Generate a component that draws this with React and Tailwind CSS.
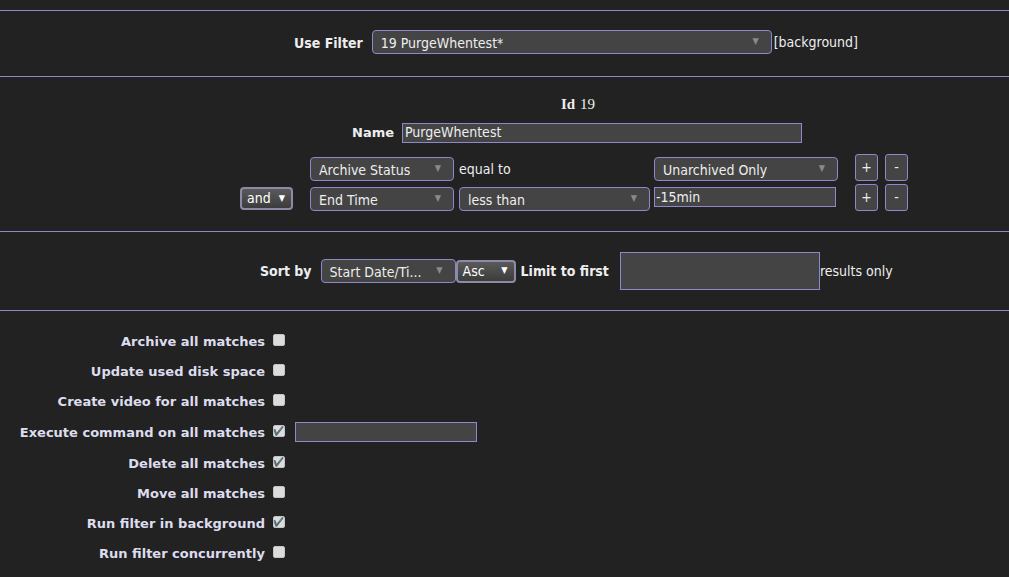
import React from 'react';

const tahoma = "font-['DejaVu_Sans',sans-serif] [font-stretch:condensed]";
const verdana = "font-['DejaVu_Sans',Verdana,sans-serif]";

function Caret({ light }) {
  return (
    <span className={light ? 'text-[9px] text-white' : 'text-[9px] text-[#8a8a8a]'}>▼</span>
  );
}

// fake select box, drawn as a div so it looks the same everywhere
function Pick({ value, w, h = 'h-[24px]', light, small }) {
  if (small) {
    return (
      <div className={`${w} h-[23px] flex items-center justify-between pl-[5px] pr-[6px] rounded-[4px] border-2 border-[#8e8aa6] bg-gradient-to-b from-[#5a5a5a] to-[#3c3c3c] text-[14px] text-white ${tahoma}`}>
        <span>{value}</span>
        <Caret light />
      </div>
    );
  }
  return (
    <div className={`${w} ${h} flex items-center justify-between pl-[8px] pr-[12px] rounded-[4px] border border-[#8c88c9] bg-[#444] text-[14px] text-[#eee] ${tahoma}`}>
      <span className="truncate pt-[2px]">{value}</span>
      <Caret light={light} />
    </div>
  );
}

function Btn({ children }) {
  return (
    <div className={`w-[23px] h-[27px] flex items-center justify-center rounded-[3px] border border-[#8c88c9] bg-[#444] text-[14px] text-[#eee] ${tahoma}`}>
      {children}
    </div>
  );
}

function Box({ on }) {
  return (
    <div className="w-[12px] h-[12px] -mt-[3px] rounded-[2px] bg-[#dcdcdc] border border-[#c4c4c4] flex items-center justify-center text-[9px] leading-none text-[#444]">
      {on ? '✔' : ''}
    </div>
  );
}

const acciones = [
  { label: 'Archive all matches', on: false },
  { label: 'Update used disk space', on: false },
  { label: 'Create video for all matches', on: false },
  { label: 'Execute command on all matches', on: true, input: true },
  { label: 'Delete all matches', on: true },
  { label: 'Move all matches', on: false },
  { label: 'Run filter in background', on: true },
  { label: 'Run filter concurrently', on: false },
];

export default function App() {
  return (
    <main className="min-h-screen w-full bg-[#222] text-[#ddd] pt-[10px]">
      <div className="border-t border-[#8c88c9]" />

      {/* Filtro a usar */}
      <div className="h-[65px] pt-[19px] flex items-start pl-[294px]">
        <span className={`text-[14px] font-bold text-[#eee] mt-[3px] mr-[9px] ${tahoma}`}>Use Filter</span>
        <Pick value="19 PurgeWhentest*" w="w-[400px]" />
        <span className={`text-[14px] text-[#eee] ml-[2px] mt-[2px] ${tahoma}`}>[background]</span>
      </div>

      <div className="border-t border-[#8c88c9]" />

      {/* Id, nombre y condiciones */}
      <div className="h-[154px]">
        <div className="pt-[16px] h-[45px] flex justify-center pl-[147px] font-['Liberation_Serif',serif] text-[15px] text-[#eee]">
          <span className="font-bold mr-[5px]">Id</span>
          <span>19</span>
        </div>
        <div className="flex items-center pl-[352px] h-[21px]">
          <span className={`w-[42px] text-right text-[13px] font-bold text-[#eee] mr-[8px] ${verdana}`}>Name</span>
          <div className={`w-[400px] h-[20px] border border-[#8c88c9] bg-[#444] text-[14px] text-[#eee] pl-[2px] flex items-center ${tahoma}`}>
            PurgeWhentest
          </div>
        </div>
        <div className="mt-[11px] flex items-end pl-[310px]">
          <Pick value="Archive Status" w="w-[144px]" />
          <div className={`w-[200px] h-[24px] pl-[5px] flex items-center text-[14px] text-[#eee] ${tahoma}`}>equal to</div>
          <Pick value="Unarchived Only" w="w-[184px]" />
          <div className="ml-[17px] flex gap-[7px]">
            <Btn>+</Btn>
            <Btn>-</Btn>
          </div>
        </div>
        <div className="mt-[3px] flex items-end pl-[240px]">
          <div className="mb-[1px]">
            <Pick value="and" w="w-[53px]" small />
          </div>
          <div className="ml-[17px]">
            <Pick value="End Time" w="w-[144px]" />
          </div>
          <div className="ml-[5px]">
            <Pick value="less than" w="w-[191px]" />
          </div>
          <div className={`ml-[4px] mb-[4px] w-[182px] h-[20px] border border-[#8c88c9] bg-[#444] text-[14px] text-[#eee] pl-[1px] flex items-center ${tahoma}`}>
            -15min
          </div>
          <div className="ml-[19px] flex gap-[7px]">
            <Btn>+</Btn>
            <Btn>-</Btn>
          </div>
        </div>
      </div>

      <div className="border-t border-[#8c88c9]" />

      {/* Orden y límite */}
      <div className="h-[78px] pt-[20px] flex items-start pl-[260px]">
        <div className="flex items-center h-[38px]">
          <span className={`text-[14px] font-bold text-[#eee] mr-[9px] ${tahoma}`}>Sort by</span>
          <Pick value="Start Date/Ti..." w="w-[135px]" />
          <Pick value="Asc" w="w-[60px]" small />
          <span className={`text-[14px] font-bold text-[#eee] ml-[5px] mr-[11px] ${tahoma}`}>Limit to first</span>
          <div className="w-[200px] h-[38px] border border-[#8c88c9] bg-[#444]" />
          <span className={`text-[14px] text-[#eee] ${tahoma}`}>results only</span>
        </div>
      </div>

      <div className="border-t border-[#8c88c9]" />

      {/* Acciones */}
      <div className="pt-[15px]">
        {acciones.map((a, i) => (
          <div key={i} className={`flex items-center ${a.input ? 'h-[32px]' : 'h-[30px]'}`}>
            <span className={`w-[265px] text-right text-[13px] font-bold text-[#dde] pt-[2px] ${verdana}`}>{a.label}</span>
            <div className="ml-[8px]">
              <Box on={a.on} />
            </div>
            {a.input && (
              <div className="ml-[10px] w-[182px] h-[20px] border border-[#8c88c9] bg-[#444]" />
            )}
          </div>
        ))}
      </div>
    </main>
  );
}
